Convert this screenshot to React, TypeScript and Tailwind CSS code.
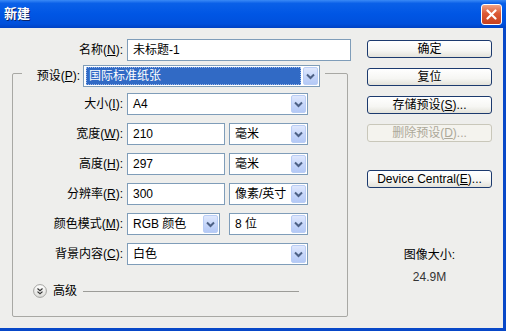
import React from 'react'

const FONT = 'font-["Liberation_Sans","Noto_Sans_CJK_SC",sans-serif]'

const Chevron = () => (
  <svg width="9" height="7" viewBox="0 0 9 7">
    <path d="M1 1.5 L4.5 5 L8 1.5" fill="none" stroke="#4d6185" strokeWidth="2" />
  </svg>
)

const ArrowBox = () => (
  <div className="flex-none w-[15px] h-[18px] mr-[1px] rounded-[2px] border border-[#b9cdf5] bg-[linear-gradient(180deg,#dfe8fd_0%,#c3d4f9_60%,#b4c9f6_100%)] flex items-center justify-center">
    <Chevron />
  </div>
)

const Label = ({ text, acc, w = 'w-[110px]' }: { text: string; acc: string; w?: string }) => (
  <div className={`${w} flex-none text-right text-black leading-[14px]`}>
    {text}(<span className="underline">{acc}</span>):
  </div>
)

const Input = ({ value, w }: { value: string; w: string }) => (
  <div className={`${w} h-[22px] ml-[4px] border border-[#7f9db9] bg-white flex items-center pl-[5px] text-black`}>
    {value}
  </div>
)

const Select = ({ value, w, ml = 'ml-[4px]' }: { value: string; w: string; ml?: string }) => (
  <div className={`${w} ${ml} h-[22px] border border-[#7f9db9] bg-white flex items-center`}>
    <div className="flex-1 pl-[5px] text-black truncate">{value}</div>
    <ArrowBox />
  </div>
)

const Button = ({ children, disabled }: { children: React.ReactNode; disabled?: boolean }) => (
  <div
    className={
      disabled
        ? 'w-[125px] h-[18px] rounded-[3px] border border-[#c9c7ba] bg-[#f4f3ee] flex items-center justify-center text-[#aca899]'
        : 'w-[125px] h-[18px] rounded-[3px] border border-[#1c3a6e] bg-[linear-gradient(180deg,#ffffff_0%,#f6f6f3_60%,#e3e2da_100%)] flex items-center justify-center text-black'
    }
  >
    {children}
  </div>
)

export default function App() {
  return (
    <div className={`w-[506px] h-[331px] overflow-hidden flex flex-col bg-[#eeeeec] text-[12px] ${FONT}`}>
      {/* title bar */}
      <div className="h-[28px] flex-none flex items-center justify-between bg-[linear-gradient(180deg,#3a8af6_0%,#0a60e8_12%,#0056e4_50%,#0050dc_85%,#0042c4_100%)]">
        <div className="pl-[4px] text-white font-bold text-[13px] [text-shadow:1px_1px_0_#0a246a]">新建</div>
        <div className="mr-[4px] w-[21px] h-[21px] rounded-[3px] border border-white bg-[linear-gradient(180deg,#f0a285_0%,#dc5a35_45%,#c8411f_100%)] flex items-center justify-center">
          <svg width="11" height="11" viewBox="0 0 11 11">
            <path d="M1.5 1.5 L9.5 9.5 M9.5 1.5 L1.5 9.5" stroke="white" strokeWidth="2.2" strokeLinecap="round" />
          </svg>
        </div>
      </div>

      {/* body */}
      <div className="flex-1 flex border-r-[3px] border-b-[3px] border-[#0848c8]">
        {/* left */}
        <div className="w-[360px] flex-none flex flex-col pt-[11px]">
          <div className="flex items-center">
            <Label text="名称" acc="N" w="w-[123px]" />
            <Input value="未标题-1" w="w-[224px]" />
          </div>

          <div className="mt-[12px] ml-[12px] w-[336px] h-[244px] border border-[#a8a8a4] rounded-[2px] flex flex-col">
            <div className="-mt-[9px] ml-[9px] w-[303px] h-[22px] flex-none flex items-center bg-[#eeeeec]">
              <div className="w-[61px] flex-none text-right pr-[3px] text-black">
                预设(<span className="underline">P</span>):
              </div>
              <div className="w-[237px] h-[22px] border border-[#7f9db9] bg-white flex items-center">
                <div className="flex-1 h-[18px] ml-[2px] mr-[2px] bg-[#316ac5] border border-dotted border-[#9ab8ea] flex items-center pl-[2px] text-white">
                  国际标准纸张
                </div>
                <ArrowBox />
              </div>
            </div>

            <div className="flex flex-col gap-[8px] mt-[6px]">
              <div className="flex items-center">
                <Label text="大小" acc="I" />
                <Select value="A4" w="w-[181px]" />
              </div>
              <div className="flex items-center">
                <Label text="宽度" acc="W" />
                <Input value="210" w="w-[98px]" />
                <Select value="毫米" w="w-[79px]" />
              </div>
              <div className="flex items-center">
                <Label text="高度" acc="H" />
                <Input value="297" w="w-[98px]" />
                <Select value="毫米" w="w-[79px]" />
              </div>
              <div className="flex items-center">
                <Label text="分辨率" acc="R" />
                <Input value="300" w="w-[98px]" />
                <Select value="像素/英寸" w="w-[79px]" />
              </div>
              <div className="flex items-center">
                <Label text="颜色模式" acc="M" />
                <Select value="RGB 颜色" w="w-[93px]" />
                <Select value="8 位" w="w-[79px]" ml="ml-[9px]" />
              </div>
              <div className="flex items-center">
                <Label text="背景内容" acc="C" />
                <Select value="白色" w="w-[181px]" />
              </div>
            </div>

            <div className="mt-[19px] ml-[20px] h-[14px] flex items-center">
              <svg width="14" height="14" viewBox="0 0 14 14">
                <defs>
                  <linearGradient id="adv" x1="0" y1="0" x2="0" y2="1">
                    <stop offset="0" stopColor="#ffffff" />
                    <stop offset="1" stopColor="#dcdcd8" />
                  </linearGradient>
                </defs>
                <circle cx="7" cy="7" r="6.4" fill="url(#adv)" stroke="#a3a3a0" />
                <path d="M4.5 4.5 L7 6.6 L9.5 4.5 M4.5 7.6 L7 9.7 L9.5 7.6" fill="none" stroke="#333" strokeWidth="1.2" />
              </svg>
              <div className="ml-[6px] text-black leading-[14px]">高级</div>
              <div className="ml-[6px] w-[216px] h-px bg-[#9c9c98]" />
            </div>
          </div>
        </div>

        {/* right */}
        <div className="flex-1 flex flex-col pl-[7px] pt-[12px]">
          <div className="flex flex-col gap-[10px]">
            <Button>确定</Button>
            <Button>复位</Button>
            <Button>
              存储预设(<span className="underline">S</span>)...
            </Button>
            <Button disabled>
              删除预设(<span className="underline">D</span>)...
            </Button>
          </div>
          <div className="mt-[28px]">
            <Button>
              Device Central(<span className="underline">E</span>)...
            </Button>
          </div>
          <div className="w-[125px] mt-[60px] text-center leading-[14px] text-black">图像大小:</div>
          <div className="w-[125px] mt-[8px] text-center leading-[14px] text-[#333]">24.9M</div>
        </div>
      </div>
    </div>
  )
}
